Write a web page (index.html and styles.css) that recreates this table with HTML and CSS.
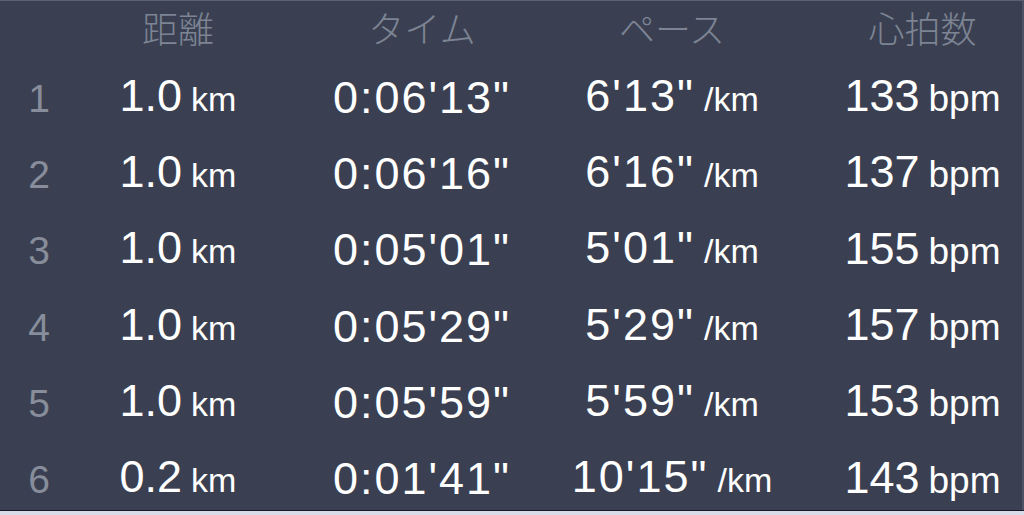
FILE: index.html
```html
<!DOCTYPE html>
<html lang="ja">
<head>
<meta charset="utf-8">
<link rel="stylesheet" href="styles.css">
</head>
<body>
<div class="frame">
  <div class="table">
    <div class="row head">
      <div class="cell idx"></div>
      <div class="cell dist">距離</div>
      <div class="cell time">タイム</div>
      <div class="cell pace">ペース</div>
      <div class="cell hr">心拍数</div>
    </div>
    <div class="row">
      <div class="cell idx"><span class="n">1</span></div>
      <div class="cell dist">1.0<span class="u km">km</span></div>
      <div class="cell time"><span class="v">0:06'13"</span></div>
      <div class="cell pace"><span class="v">6'13"</span><span class="u km">/km</span></div>
      <div class="cell hr">133<span class="u bpm">bpm</span></div>
    </div>
    <div class="row">
      <div class="cell idx"><span class="n">2</span></div>
      <div class="cell dist">1.0<span class="u km">km</span></div>
      <div class="cell time"><span class="v">0:06'16"</span></div>
      <div class="cell pace"><span class="v">6'16"</span><span class="u km">/km</span></div>
      <div class="cell hr">137<span class="u bpm">bpm</span></div>
    </div>
    <div class="row">
      <div class="cell idx"><span class="n">3</span></div>
      <div class="cell dist">1.0<span class="u km">km</span></div>
      <div class="cell time"><span class="v">0:05'01"</span></div>
      <div class="cell pace"><span class="v">5'01"</span><span class="u km">/km</span></div>
      <div class="cell hr">155<span class="u bpm">bpm</span></div>
    </div>
    <div class="row">
      <div class="cell idx"><span class="n">4</span></div>
      <div class="cell dist">1.0<span class="u km">km</span></div>
      <div class="cell time"><span class="v">0:05'29"</span></div>
      <div class="cell pace"><span class="v">5'29"</span><span class="u km">/km</span></div>
      <div class="cell hr">157<span class="u bpm">bpm</span></div>
    </div>
    <div class="row">
      <div class="cell idx"><span class="n">5</span></div>
      <div class="cell dist">1.0<span class="u km">km</span></div>
      <div class="cell time"><span class="v">0:05'59"</span></div>
      <div class="cell pace"><span class="v">5'59"</span><span class="u km">/km</span></div>
      <div class="cell hr">153<span class="u bpm">bpm</span></div>
    </div>
    <div class="row">
      <div class="cell idx"><span class="n">6</span></div>
      <div class="cell dist">0.2<span class="u km">km</span></div>
      <div class="cell time"><span class="v">0:01'41"</span></div>
      <div class="cell pace"><span class="v">10'15"</span><span class="u km">/km</span></div>
      <div class="cell hr">143<span class="u bpm">bpm</span></div>
    </div>
  </div>
  <div class="edge"></div>
</div>
</body>
</html>
```
FILE: styles.css
```css
html, body {
  margin: 0;
  padding: 0;
  background: #d9dce8;
}
.frame {
  width: 1024px;
  height: 515px;
  display: flex;
  flex-direction: column;
}
.table {
  height: 509px;
  overflow: hidden;
  background: #3a4051;
  border-top: 1px solid #5c6272;
  border-right: 2px solid #4d5364;
  color: #ffffff;
  font-family: "Liberation Sans", Arial, "Noto Sans CJK JP", sans-serif;
}
.edge {
  height: 1px;
  background: #161a26;
}
.row {
  display: grid;
  grid-template-columns: 78px 200px 288px 212px 1fr;
  align-items: center;
  height: 76.3px;
  font-size: 45px;
  line-height: 45px;
}
.row.head {
  height: 52px;
  padding-bottom: 6px;
  font-family: "Noto Sans CJK JP", sans-serif;
  font-weight: 300;
  font-size: 36px;
  line-height: 36px;
  color: #7d8494;
}
.cell {
  text-align: center;
  white-space: nowrap;
}
.cell.hr {
  padding-left: 45px;
}
.v {
  letter-spacing: 2px;
}
.n {
  font-size: 39px;
  color: #878d9a;
}
.u {
  margin-left: 9px;
}
.km {
  font-size: 34px;
}
.bpm {
  font-size: 37px;
}
```
